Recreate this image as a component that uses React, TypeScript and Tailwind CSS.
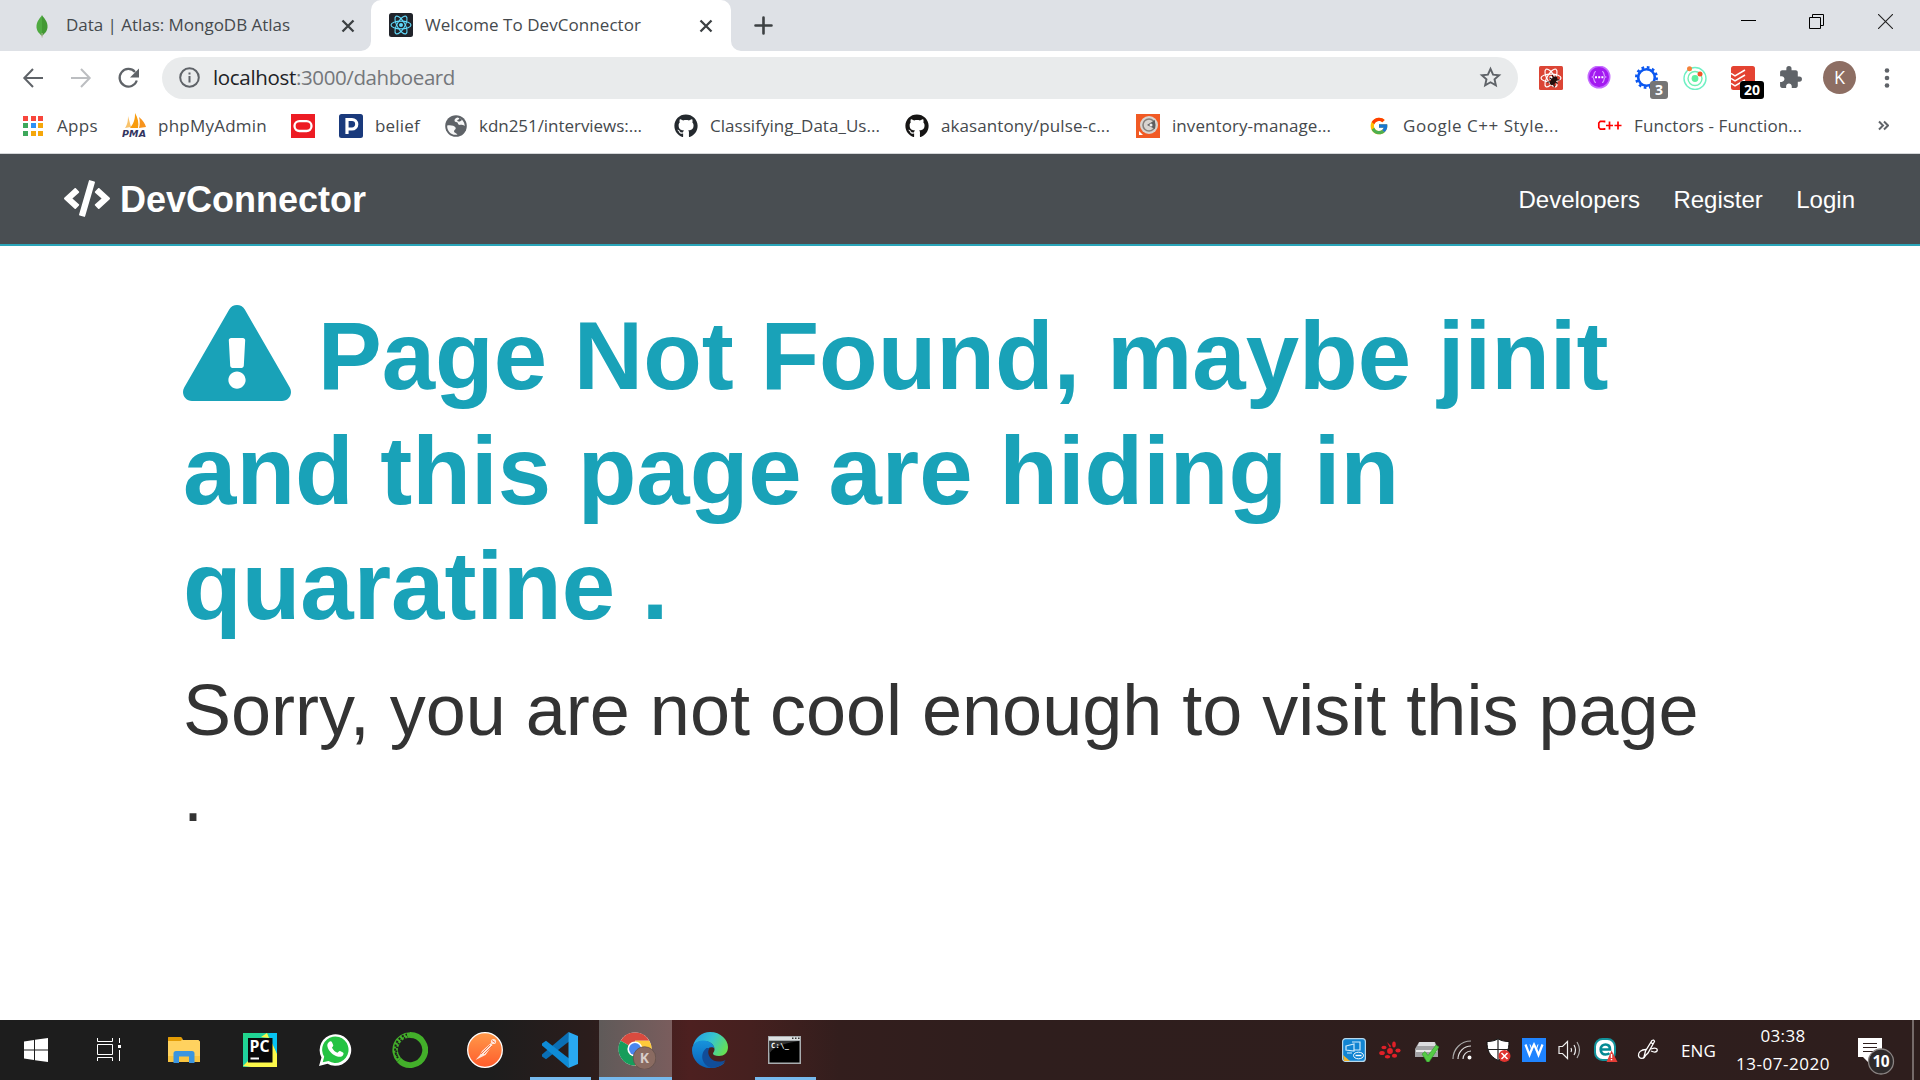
import React, { useLayoutEffect, useRef, useState } from "react";
import { FaCode, FaExclamationTriangle, FaGithub } from "react-icons/fa";
import { MdExtension } from "react-icons/md";
import { FcGoogle } from "react-icons/fc";

/** A single line of text whose tracking is adjusted to fill `w` pixels. */
function Fit({ w, children, className = "" }: { w: number; children: string; className?: string }) {
  const ref = useRef<HTMLSpanElement>(null);
  const [tracking, setTracking] = useState(0);
  useLayoutEffect(() => {
    if (ref.current) setTracking((w - ref.current.getBoundingClientRect().width) / children.length);
  }, [w, children]);
  return (
    <span className={`block shrink-0 whitespace-nowrap ${className}`} style={{ width: w }}>
      <span ref={ref} className="inline-block" style={{ letterSpacing: tracking }}>
        {children}
      </span>
    </span>
  );
}

const AtomIcon = ({ color = "#61dafb", sw = 1.1 }: { color?: string; sw?: number }) => (
  <g fill="none" stroke={color} strokeWidth={sw}>
    <ellipse cx="12" cy="12" rx="10" ry="3.9" />
    <ellipse cx="12" cy="12" rx="10" ry="3.9" transform="rotate(60 12 12)" />
    <ellipse cx="12" cy="12" rx="10" ry="3.9" transform="rotate(120 12 12)" />
    <circle cx="12" cy="12" r="2" fill={color} stroke="none" />
  </g>
);

const Cross = () => (
  <svg width="14" height="14" viewBox="0 0 14 14" className="shrink-0">
    <path d="M1.500 1.500l11 11M12.500 1.500l-11 11" stroke="#3c4043" strokeWidth="2.300" />
  </svg>
);

function TabStrip() {
  return (
    <div className="flex h-[51px] bg-[#dee1e6] text-[17px] text-[#45494d]">
      <div className="flex h-[51px] w-[371px] items-center rounded-br-[10px] pl-[34px]">
        <svg width="16" height="24" viewBox="0 0 16 24">
          <path d="M8 1C6.500 4 2 7 2.500 13.500 3 18 6 20 8 22z" fill="#4faa41" />
          <path d="M8 1c1.500 3 6 6 5.500 12.500C13 18 10 20 8 22z" fill="#439934" />
          <path d="M7.600 19h1v4.500h-1z" fill="#b8b09c" />
        </svg>
        <Fit w={224} className="ml-4 pb-[2px]">Data | Atlas: MongoDB Atlas</Fit>
        <span className="ml-[51px]"><Cross /></span>
      </div>
      <div className="relative flex h-[51px] w-[360px] items-center rounded-t-[10px] bg-white pl-[18px]">
        <svg className="absolute bottom-0 -left-[10px]" width="10" height="10">
          <path d="M10 0v10H0A10 10 0 0 0 10 0z" fill="#fff" />
        </svg>
        <svg className="absolute -right-[10px] bottom-0" width="10" height="10">
          <path d="M0 0v10h10A10 10 0 0 1 0 0z" fill="#fff" />
        </svg>
        <svg width="24" height="24" viewBox="0 0 24 24" className="-mt-px">
          <rect width="24" height="24" rx="2.500" fill="#20232a" />
          <AtomIcon sw={1.1} />
        </svg>
        <Fit w={216} className="ml-[12px] pb-[2px]">Welcome To DevConnector</Fit>
        <span className="ml-[58px]"><Cross /></span>
      </div>
      <div className="flex grow items-center pl-[23px]">
        <svg width="19" height="19" viewBox="0 0 19 19">
          <path d="M9.500 1.500v16M1.500 9.500h16" stroke="#3c4043" strokeWidth="2.600" strokeLinecap="round" />
        </svg>
      </div>
      <div className="flex h-[43px] items-center text-black">
        <svg width="15" height="15" className="mr-[53px]">
          <path d="M0 6.500h15" stroke="#000" />
        </svg>
        <svg width="15" height="15" viewBox="0 0 15 15" className="mr-[54px]">
          <path d="M.5 3.500h11v11H.5zM3.500 3V.5h11v11H12" fill="none" stroke="#000" />
        </svg>
        <svg width="15" height="15" viewBox="0 0 15 15" className="mr-[27px]">
          <path d="M0 0l15 15M15 0L0 15" stroke="#222" strokeWidth="1.100" />
        </svg>
      </div>
    </div>
  );
}

function Toolbar() {
  return (
    <div className="flex h-[53px] items-center pl-[22px]">
      <svg width="22" height="22" viewBox="0 0 22 22" fill="none" stroke="#5f6368" strokeWidth="2">
        <path d="M21 11H2.500M11 2L2.300 11l8.700 9" />
      </svg>
      <svg className="ml-[26px]" width="22" height="22" viewBox="0 0 22 22" fill="none" stroke="#bcbec1" strokeWidth="2">
        <path d="M1 11h18.500M11 2l8.700 9-8.700 9" />
      </svg>
      <svg className="ml-[25px]" width="24" height="24" viewBox="0 0 24 24">
        <path d="M19.800 14.500A8.800 8.800 0 1 1 18 5.900" fill="none" stroke="#5f6368" strokeWidth="2.200" />
        <path d="M22 2.500v9h-9z" fill="#5f6368" />
      </svg>
      <div className="ml-[21px] flex h-[42px] w-[1356px] items-center rounded-full bg-[#e9ebec] pl-[16px]">
        <svg width="23" height="23" viewBox="0 0 23 23">
          <circle cx="11.500" cy="11.500" r="9.300" fill="none" stroke="#5f6368" strokeWidth="2" />
          <path d="M10.500 10h2v6.500h-2zM10.500 6.500h2v2h-2z" fill="#5f6368" />
        </svg>
        <Fit w={83} className="ml-3 text-[20.5px] text-[#202124]">localhost</Fit>
        <Fit w={159} className="text-[20.5px] text-[#74777b]">:3000/dahboeard</Fit>
        <svg className="ml-[1024px]" width="23" height="23" viewBox="0 0 24 24">
          <path d="M12 3l2.700 6 6.300.6-4.800 4.300 1.400 6.300L12 17l-5.600 3.200 1.400-6.300L3 9.600 9.300 9z" fill="none" stroke="#5f6368" strokeWidth="2" />
        </svg>
      </div>
      <div className="flex items-center pl-[21px]">
        <svg width="24" height="24" viewBox="0 0 24 24">
          <rect width="24" height="24" rx="1.500" fill="#dc4535" />
          <AtomIcon color="#fff" sw={1.2} />
          <g transform="rotate(35 15 15)">
            <ellipse cx="14.500" cy="15" rx="2.700" ry="5" fill="#23100e" />
            <path d="M10 11l3 2M19 11l-3 2M9.500 15h10M10 20l3-3M19 20l-3-3" stroke="#23100e" strokeWidth="1.200" />
          </g>
        </svg>
        <svg className="ml-6" width="24" height="24" viewBox="0 0 24 24">
          <circle cx="12" cy="11" r="11.500" fill="#c56bff" />
          <circle cx="12" cy="11" r="10" fill="#a31af0" />
          <path d="M9 5.500c-3 0-1 4.500-3.500 5.500C8 12 6 16.500 9 16.500M15 5.500c3 0 1 4.500 3.500 5.500-2.500 1-.5 5.500-3.500 5.500" fill="none" stroke="#d79aff" strokeWidth="1.200" />
          <path d="M8 10.200h2v2H8zM11.200 10.200h2v2h-2zM14.400 10.200h2v2h-2z" fill="#fff" />
        </svg>
        <div className="relative ml-6 h-6 w-6">
          <svg width="24" height="24" viewBox="0 0 24 24">
            <circle cx="11.500" cy="11.500" r="8.300" fill="none" stroke="#0b57f0" strokeWidth="2.600" />
            <circle cx="11.500" cy="11.500" r="10.200" fill="none" stroke="#0b57f0" strokeWidth="2.600" strokeDasharray="2.670 2.670" />
          </svg>
          <span className="absolute top-[15px] left-[15px] flex h-[18px] w-[18px] items-center justify-center rounded-[3px] bg-[#757575] text-[14px] font-bold text-white">3</span>
        </div>
        <svg className="ml-6" width="24" height="24" viewBox="0 0 24 24">
          <circle cx="12" cy="12.500" r="11" fill="none" stroke="#6ff0c4" strokeWidth="1.400" />
          <circle cx="12" cy="12.500" r="7" fill="none" stroke="#6ff0b4" strokeWidth="1.400" />
          <circle cx="12" cy="12.500" r="3.400" fill="#5ff0a0" />
          <circle cx="6.500" cy="2.700" r="2.500" fill="#f5813a" />
          <circle cx="17" cy="8" r="2.500" fill="#f2562a" />
        </svg>
        <div className="relative ml-6 h-6 w-6">
          <svg width="24" height="24" viewBox="0 0 24 24">
            <rect width="24" height="24" rx="2.500" fill="#e44332" />
            <path d="M0 7.500l4 2.300L14 4M0 12.500l4 2.300L14 9M0 17.500l4 2.300L14 14" fill="none" stroke="#fff" strokeWidth="1.500" />
          </svg>
          <span className="absolute top-[15px] left-[9px] flex h-[18px] w-[24px] items-center justify-center rounded-[3px] bg-black text-[14px] font-bold text-white">20</span>
        </div>
        <MdExtension className="ml-[23px] text-[25px] text-[#5f6368]" />
        <div className="ml-[20px] flex h-[33px] w-[33px] items-center justify-center rounded-full bg-[#8d6e63] text-[18px] text-white">K</div>
        <svg className="ml-[28px]" width="6" height="20" viewBox="0 0 6 20" fill="#5f6368">
          <circle cx="3" cy="2.500" r="2.300" /><circle cx="3" cy="10" r="2.300" /><circle cx="3" cy="17.500" r="2.300" />
        </svg>
      </div>
    </div>
  );
}

function Bookmarks() {
  const dots = ["#f8463c", "#f8463c", "#f8463c", "#3da85b", "#2e90f5", "#f5a70b", "#3da85b", "#f5a70b", "#f5a70b"];
  return (
    <div className="flex h-[50px] items-center border-b border-[#d5d7d9] pb-[6px] pl-[23px] text-[17px] text-[#45494d]">
      <div className="grid w-5 shrink-0 grid-cols-3 gap-x-[3px] gap-y-[2.500px]">
        {dots.map((c, i) => <span key={i} className="h-[5px] w-[5px]" style={{ background: c }} />)}
      </div>
      <Fit w={41} className="ml-[14px]">Apps</Fit>
      <svg className="ml-[24px] shrink-0" width="25" height="25" viewBox="0 0 25 25">
        <path d="M3 15C6 11 6 6 6 3l3 11z" fill="#f9c36b" />
        <path d="M8 15C13 9 13 4 13 0c3 5 4 10 3 15z" fill="#f89c0e" />
        <path d="M17 15c1-4 1-7 0-11 4 3 6 7 7 10z" fill="#f7941e" />
        <text x="0" y="23.500" fontSize="9.500" fontWeight="bold" fontStyle="italic" fill="#33355f" textLength="24" fontFamily="DejaVu Sans">PMA</text>
      </svg>
      <Fit w={109} className="ml-[11px]">phpMyAdmin</Fit>
      <svg className="ml-[24px] shrink-0" width="24" height="24" viewBox="0 0 24 24">
        <path d="M0 0h24v24H0z" fill="#ed1c24" />
        <rect x="3.500" y="7.200" width="17" height="9.800" rx="4.900" fill="none" stroke="#fff" strokeWidth="2.300" />
      </svg>
      <svg className="ml-[24px] shrink-0" width="24" height="24" viewBox="0 0 24 24">
        <rect width="24" height="24" rx="2.500" fill="#1a3a7c" />
        <path d="M8 20V5.500h5a4.500 4.500 0 0 1 0 9.500H8" fill="none" stroke="#fff" strokeWidth="3.200" />
      </svg>
      <Fit w={45} className="ml-[12px]">belief</Fit>
      <svg className="ml-[24px] shrink-0" width="24" height="24" viewBox="0 0 24 24">
        <circle cx="12" cy="12" r="10.800" fill="#5f6368" />
        <path d="M13.500 3.500c-2 .5-3 1.500-3 3 0 1.300 1 1.500 2.500 1.800 1.200.3.600 2 2 2.500 1.300.4 2.500-.8 5.800 1.200a8.800 8.800 0 0 0-7.300-8.500z" fill="#fff" opacity=".95" />
        <path d="M14.500 3.500c1.500 1 .5 2-1 2.500-.8.400 0 1.300 1 1.500 1.500.3 2.500-.8 3.500-1.500-1-1.500-2-2-3.500-2.500z" fill="#5f6368" />
        <path d="M3.200 11.500c3.500-.5 7 0 8.300 2 1 1.800-1.300 2-1.500 3.800-.1 1.700 2 1.500 3.500 3.300-6 1.400-10.800-3.600-10.300-9.100z" fill="#fff" opacity=".95" />
      </svg>
      <Fit w={163} className="ml-[11px]">kdn251/interviews:...</Fit>
      <FaGithub className="ml-[32px] shrink-0 text-[24px] text-[#24292e]" />
      <Fit w={170} className="ml-[12px]">Classifying_Data_Us...</Fit>
      <FaGithub className="ml-[25px] shrink-0 text-[24px] text-[#161514]" />
      <Fit w={169} className="ml-[12px]">akasantony/pulse-c...</Fit>
      <svg className="ml-[26px] shrink-0" width="24" height="24" viewBox="0 0 24 24">
        <path d="M0 0h24v24H0z" fill="#f15a24" />
        <circle cx="13" cy="11" r="9" fill="#d8d4d0" />
        <circle cx="13" cy="11" r="6" fill="none" stroke="#85807c" strokeWidth="1.600" />
        <path d="M11 11l8-5v9z" fill="#5e5e60" />
        <circle cx="15" cy="11" r="1.500" fill="#eee" />
        <path d="M3 17v4h4z" fill="#fff" />
      </svg>
      <Fit w={159} className="ml-[12px]">inventory-manage...</Fit>
      <FcGoogle className="ml-[38px] shrink-0 text-[20px]" />
      <Fit w={156} className="ml-[14px]">Google C++ Style...</Fit>
      <svg className="ml-[38px] shrink-0" width="25" height="24" viewBox="0 0 25 24">
        <path d="M7.500 8.500V7.300H3.300L1.800 9v4.500l1.500 1.700h4.200V14M9 11.500h7M12.500 7.500v8M17.500 11.500h7M21 7.500v8" fill="none" stroke="#f00" strokeWidth="1.700" />
      </svg>
      <Fit w={168} className="ml-[12px]">Functors - Function...</Fit>
      <svg className="ml-[76px] shrink-0" width="11" height="11" viewBox="0 0 11 11" fill="none" stroke="#5f6368" strokeWidth="2">
        <path d="M1 1.500l4 4-4 4M6 1.500l4 4-4 4" />
      </svg>
    </div>
  );
}

function Page() {
  return (
    <main className="flex h-[866px] flex-col bg-white font-['Liberation_Sans',Arial,sans-serif]">
      <nav className="flex h-[92px] shrink-0 items-center justify-between border-b-2 border-[#2ba5b9] bg-[#494e52] pr-[65px] pl-[64px] text-white">
        <div className="flex items-center gap-[10px] text-4xl font-bold">
          <FaCode className="-mt-[2px] h-[37px] w-[46px]" />
          <span className="pt-px">DevConnector</span>
        </div>
        <div className="flex gap-[33.5px] pt-[2px] text-2xl">
          <span>Developers</span>
          <span>Register</span>
          <span>Login</span>
        </div>
      </nav>
      <section className="px-[183px] pt-[52px]">
        <h1 className="text-[96px] leading-[115px] font-bold whitespace-nowrap text-[#19a2b8]">
          <FaExclamationTriangle className="inline-block h-[96px] w-[108px] align-[-12px]" /> Page Not Found, maybe jinit
          <br />and this page are hiding in
          <br />quaratine .
        </h1>
        <p className="mt-[24px] text-[72px] leading-[86px] whitespace-nowrap text-[#333]">
          Sorry, you are not cool enough to visit this page
          <br />.
        </p>
      </section>
    </main>
  );
}

const Slot = ({ children, className = "" }: { children: React.ReactNode; className?: string }) => (
  <div className={`flex h-[60px] shrink-0 items-center justify-center ${className}`}>{children}</div>
);

function Apps() {
  return (
    <>
      <Slot className="w-[72px]">
        <svg width="24" height="24" viewBox="0 0 24 24" fill="#fff">
          <path d="M0 3.400l10-1.400v9.500H0zM11 1.800L24 0v11.500H11zM0 12.500h10V22L0 20.600zM11 12.500h13V24l-13-1.800z" />
        </svg>
      </Slot>
      <Slot className="w-[74px]">
        <svg width="25" height="24" viewBox="0 0 25 24" fill="none" stroke="#fff" strokeWidth="1">
          <path d="M.5 0v3.500h15V0M.5 6.500h15v10H.5zM.5 23v-3.500h15V23M22.500 0v5M22.500 12v11" />
          <path d="M21 7h3v3h-3z" fill="#fff" stroke="none" />
        </svg>
      </Slot>
      <Slot className="w-[76px]">
        <svg width="32" height="28" viewBox="0 0 32 28">
          <path d="M0 1.500h13l2 2.500h15.500L32 5.500V26H0z" fill="#ffd25f" />
          <path d="M0 2.200Q0 1 1.200 1H13l1.500 1.500L13 5H0z" fill="#e39c05" />
          <path d="M0 20h32v6H0z" fill="#f9c540" />
          <path d="M5.500 27V17.500q0-2.500 2.500-2.500h16q2.500 0 2.500 2.500V27h-5.500v-6.500H11V27z" fill="#3b95df" />
        </svg>
      </Slot>
      <Slot className="w-[75px]">
        <svg width="34" height="34" viewBox="0 0 34 34">
          <defs>
            <linearGradient id="pc" x1="0" y1="0" x2="1" y2="1">
              <stop offset="0" stopColor="#21d789" /><stop offset=".5" stopColor="#1fcfa5" /><stop offset="1" stopColor="#07c3f2" />
            </linearGradient>
          </defs>
          <path d="M0 0h34v34H0z" fill="url(#pc)" />
          <path d="M18 4l6-4 2 5zM29 9l5 12v13H8l-8-1 8-8z" fill="#fcf84a" />
          <path d="M26 0h8v20l-6-12z" fill="#07c3f2" />
          <path d="M5 5h24.500v24.500H5z" fill="#090909" />
          <text x="6.500" y="19" fontSize="15.500" fontWeight="bold" fill="#fff" textLength="20" lengthAdjust="spacingAndGlyphs" fontFamily="Open Sans">PC</text>
          <path d="M7.500 24.500h8.500v2H7.500z" fill="#fff" />
        </svg>
      </Slot>
      <Slot className="w-[75px]">
        <svg width="34" height="34" viewBox="0 0 34 34">
          <path d="M1 33l2.500-8.500A15.800 15.800 0 1 1 9.500 30.700z" fill="#fff" />
          <path d="M4.700 29.300l1.500-5.500a13.200 13.200 0 1 1 4.300 4.200z" fill="#25c343" />
          <path d="M11 9c1-1 2.500-.8 3 .3l1.200 2.800c.4 1-.8 2-1.200 2.700 1.500 2.700 3 4 5.500 5 .8-.7 1.600-2.200 2.600-1.700l2.900 1.400c1.200.7.3 3-1 3.800-1.800 1-4.200.7-7.500-1C13 20.500 9.500 16 9.300 12.500 9.300 11 10 9.900 11 9z" fill="#fff" />
        </svg>
      </Slot>
      <Slot className="w-[75px]">
        <svg width="36" height="36" viewBox="0 0 36 36" fill="none">
          <path d="M18 3a15 15 0 1 1-11 25" stroke="#43b02a" strokeWidth="5.800" />
          <path d="M7 28A15 15 0 0 1 18 3" stroke="#43b02a" strokeWidth="5.600" />
          <path d="M6 26A15 15 0 0 1 15 2.500" stroke="#1d1d1d" strokeWidth="2" strokeDasharray="2 2" />
          <path d="M5 24A15 15 0 0 1 16 5" stroke="#1d1d1d" strokeWidth="2" strokeDasharray="1.500 2.500" />
        </svg>
      </Slot>
      <Slot className="w-[75px]">
        <svg width="36" height="36" viewBox="0 0 36 36">
          <defs><linearGradient id="pm" x1="0" y1="0" x2="0" y2="1"><stop stopColor="#ff9a4a" /><stop offset="1" stopColor="#ff5c2c" /></linearGradient></defs>
          <circle cx="18" cy="18" r="17.300" fill="url(#pm)" stroke="#fff" strokeWidth="1.300" />
          <circle cx="26.500" cy="9.500" r="2.600" fill="#ffe6da" />
          <path d="M24 11l-9 8-2 4-4.500 5 6-3 4-2 7-10z" fill="#ffe6da" />
          <path d="M23 13l-9 9M25 14l-8 8M25 8.500l3 2" stroke="#f26b3a" strokeWidth=".9" />
        </svg>
      </Slot>
      <Slot className="relative w-[75px]">
        <svg width="36" height="36" viewBox="0 0 36 36">
          <path d="M27 9.500L4 27.300 0 24.500v-2L26.500 0z" fill="#0a6fb5" />
          <path d="M27 26.500L4 8.700 0 11.500v2L26.500 36z" fill="#0e8bd6" />
          <path d="M26.500 0L36 4v28l-9.500 4z" fill="#29a9f2" />
        </svg>
        <span className="absolute bottom-0 left-[8px] h-[3px] w-[61px] bg-[#76b9ed]" />
      </Slot>
      <Slot className="relative w-[75px]">
        <div className="absolute left-[2px] h-[60px] w-[73px] border-b-[3px] border-[#76b9ed] bg-linear-to-r from-[#5f5a59] to-[#7a5d5d]" />
        <svg className="relative left-[2px]" width="38" height="38" viewBox="0 0 38 38">
          <circle cx="17" cy="18" r="16.500" fill="#fff" />
          <path d="M17 18L2.700 9.700A16.500 16.500 0 0 1 31.300 9.700H17z" fill="#d84b3f" />
          <path d="M17 18l-14.300-8.300A16.500 16.500 0 0 0 17 34.500l7-12z" fill="#169d5b" />
          <path d="M17 18V9.700h14.300A16.500 16.500 0 0 1 17 34.500z" fill="#fdca3b" />
          <circle cx="17" cy="18" r="7.600" fill="#fff" />
          <circle cx="17" cy="18" r="6" fill="#4a86ee" />
          <circle cx="26.500" cy="27" r="11.300" fill="#8a6b61" stroke="#5f4d48" strokeWidth=".7" />
          <text x="26.500" y="32" fontSize="14" fontWeight="bold" textAnchor="middle" fill="#d8cdc9" fontFamily="Open Sans">K</text>
        </svg>
      </Slot>
      <Slot className="w-[75px]">
        <svg width="36" height="36" viewBox="0 0 36 36">
          <defs>
            <linearGradient id="eg" x1="0" y1=".2" x2="1" y2=".6"><stop stopColor="#249fe5" /><stop offset=".5" stopColor="#36c5d0" /><stop offset="1" stopColor="#66e054" /></linearGradient>
            <linearGradient id="eb" x1="0" y1="0" x2="0" y2="1"><stop stopColor="#1793dc" /><stop offset="1" stopColor="#0b62b8" /></linearGradient>
          </defs>
          <path d="M1 14A18 18 0 0 1 18 0c11 0 18 8 18 15 0 6-4 9-9 9-4 0-6-1-6-2.500 0-1 1.500-1.500 1.500-4C22.500 13 18 9 12 9 7 9 3 11 1 14z" fill="url(#eg)" />
          <path d="M0 18c0-6 5-9.500 11-9.500 7 0 11 4 11.500 8-1.500-2-7-2-8.500 3-1.500 6 2 12 9 13.500 4 .8 8-1.500 10-3C30 34 24 36 18 36 8 36 0 28 0 18z" fill="url(#eb)" />
          <path d="M14.500 16C7 22 10 33 19 36c6 0 12-3 14.500-8-5 2.500-12 2-15-2-2.500-3-3-7-1-10z" fill="#114d99" />
        </svg>
      </Slot>
      <Slot className="relative w-[75px]">
        <svg width="33" height="28" viewBox="0 0 33 28">
          <path d="M0 0h33v28H0z" fill="#a9adb0" />
          <path d="M1 1h31v3H1z" fill="#dde0e2" />
          <path d="M24 1.500h1.500v1.500H24zM27 1.500h1.500v1.500H27zM30 1.500h1.500v1.500H30z" fill="#333" />
          <path d="M1.500 5h30v21.500h-30z" fill="#000" />
          <path d="M1.500 5h30c-12 2-24 4-30 12z" fill="#333" />
          <text x="3" y="11.500" fontSize="7" fontWeight="bold" fill="#fff" fontFamily="DejaVu Sans Mono" textLength="18">C:\_</text>
        </svg>
        <span className="absolute bottom-0 left-[8px] h-[3px] w-[61px] bg-[#76b9ed]" />
      </Slot>
    </>
  );
}

function Tray() {
  return (
    <>
      <Slot className="w-[36px]">
        <svg width="24" height="24" viewBox="0 0 24 24">
          <rect x=".6" y=".6" width="22.800" height="22.800" rx="3" fill="#1184d2" stroke="#b7d8ec" strokeWidth="1.200" />
          <path d="M1 17l7 6H2z" fill="#f2b52c" />
          <path d="M4 8l8-2v7l-8-1zM10 4h8v8h-6M5 15h5" fill="none" stroke="#cfeafb" strokeWidth="1.200" />
          <ellipse cx="16.500" cy="17.500" rx="5" ry="3.300" fill="#1184d2" stroke="#fff" />
          <path d="M13.500 17.500h6" stroke="#fff" strokeWidth="1.400" />
        </svg>
      </Slot>
      <Slot className="w-[36px]">
        <svg width="22" height="18" viewBox="0 0 22 18" fill="#e02028">
          <circle cx="11" cy="10" r="2.900" /><ellipse cx="5" cy="6.500" rx="2.600" ry="1.700" /><ellipse cx="3" cy="12" rx="2.800" ry="2" />
          <ellipse cx="8.500" cy="15.800" rx="2.700" ry="1.800" /><ellipse cx="15.500" cy="14.800" rx="2.600" ry="2" /><ellipse cx="19" cy="9.500" rx="2.600" ry="2" />
          <ellipse cx="15" cy="3.500" rx="1.800" ry="2.900" /><path d="M8 1l4 4-1 2z" />
        </svg>
      </Slot>
      <Slot className="w-[36px]">
        <svg width="25" height="24" viewBox="0 0 25 24">
          <path d="M5 4h16l3 7v8H1v-8z" fill="#a2a2a4" />
          <path d="M5.500 4h15l1 4h-18z" fill="#dcdcde" />
          <path d="M2 12h21v2H2z" fill="#e8e8e8" />
          <path d="M8 16l3-2.500 3 4L22 7l3 2-10 15h-2z" fill="#55cc45" stroke="#2f9a2c" strokeWidth=".6" />
        </svg>
      </Slot>
      <Slot className="w-[36px]">
        <svg width="20" height="20" viewBox="0 0 20 20" fill="none" stroke="#ddd" strokeWidth="1.200">
          <path d="M1 19A18 18 0 0 1 19 1" stroke="#aaa" /><path d="M6 19A13 13 0 0 1 19 6" /><path d="M11 19a8 8 0 0 1 8-8" />
          <circle cx="17.500" cy="17.500" r="1.400" fill="#fff" stroke="#fff" />
        </svg>
      </Slot>
      <Slot className="w-[36px]">
        <svg width="25" height="25" viewBox="0 0 25 25">
          <path d="M12 .8c3 2 7 2.700 11 2.700C23 12 21 18 12 22.500 3 18 1 12 1 3.500c4 0 8-.7 11-2.700z" fill="#fff" stroke="#111" />
          <path d="M12 1v21M1 11.500h22" stroke="#222" strokeWidth="1.200" />
          <circle cx="18.500" cy="18" r="6" fill="#e0342f" />
          <path d="M15.500 15l6 6M21.500 15l-6 6" stroke="#fff" strokeWidth="1.500" />
        </svg>
      </Slot>
      <Slot className="w-[36px]">
        <svg width="24" height="24" viewBox="0 0 24 24">
          <path d="M0 0h24v24H0z" fill="#1f84ff" />
          <path d="M3.500 6.500L7.500 17 9.800 11 12 6.500 14.200 11 16.500 17 20.500 6.500" fill="none" stroke="#fff" strokeWidth="2.200" />
          <path d="M8 6.500l2 6M16 6.500l-2 6" stroke="#fff" strokeWidth="1" />
        </svg>
      </Slot>
      <Slot className="w-[36px]">
        <svg width="24" height="20" viewBox="0 0 24 20" fill="none" stroke="#eee" strokeWidth="1.200">
          <path d="M1 6.500h3.500L9.500 1.500v17l-5-5H1z" />
          <path d="M13 8q1.200 2 0 4M16 5q3 5 0 10" /><path d="M19 2q5 8 0 16" stroke="#aaa" />
        </svg>
      </Slot>
      <Slot className="w-[36px]">
        <svg width="24" height="24" viewBox="0 0 24 24" className="-ml-px">
          <rect x="1" y="1" width="20" height="21" rx="7.500" fill="#fff" stroke="#12929b" strokeWidth="2" />
          <path d="M6.500 11.500h9.500c0-3.500-2-5-4.500-5s-4.800 1.700-4.800 5 2.300 5 4.800 5c1.500 0 3-.4 4-1.200" fill="none" stroke="#068a94" strokeWidth="2.700" />
          <path d="M17.500 12.500L23.500 24h-11z" fill="#e53c35" />
          <path d="M16.800 16h1.400v4h-1.400zM16.800 21h1.400v1.300h-1.400z" fill="#fff" />
        </svg>
      </Slot>
      <Slot className="w-[48px]">
        <svg width="22" height="22" viewBox="0 0 22 22" fill="none" stroke="#fff" strokeWidth="1.300">
          <path d="M7 18L8.500 12 15 1.500q2-1.200 2.500 1L11 14zM14 3.500l2 1.500" />
          <path d="M9 10.500c-5 0-8 3-7.500 6 .5 4 6 3.500 6.500.5M14 10c5-2 7 0 6 2-1 1.300-4 1-6 0" />
        </svg>
      </Slot>
    </>
  );
}

function Taskbar() {
  return (
    <footer className="flex h-[60px] bg-[linear-gradient(90deg,#1d1d1d_0px,#1d1d1d_490px,#2b1d1c_590px,#4d2020_690px,#45201f_750px,#331e1d_840px,#2f1e1d_1000px,#2e1e1d_1920px)] text-white">
      <Apps />
      <div className="w-[514px]" />
      <Tray />
      <Slot className="ml-[9px] pt-px"><Fit w={35} className="text-[17px]">ENG</Fit></Slot>
      <div className="ml-[20px] flex w-[94px] shrink-0 flex-col items-center pt-[2px] text-[17px] leading-[28px]">
        <Fit w={45}>03:38</Fit>
        <Fit w={94}>13-07-2020</Fit>
      </div>
      <Slot className="ml-[28px] w-[38px]">
        <svg width="38" height="38" viewBox="0 0 38 38" className="mt-[12px]">
          <path d="M0 1h24v19h-13v6l-6-6H0z" fill="#fff" />
          <path d="M5 6.500h14M5 10.500h14M5 14.500h14" stroke="#2e1e1d" strokeWidth="1.200" />
          <circle cx="23" cy="24.500" r="12.500" fill="#2e2a2a" stroke="#8a8483" strokeWidth="1.300" />
          <text x="23" y="30" fontSize="15.500" fontWeight="bold" textAnchor="middle" textLength="17" fill="#fff" fontFamily="Open Sans">10</text>
        </svg>
      </Slot>
      <span className="ml-auto h-[60px] w-[2px] bg-[#756a69]" />
      <span className="w-[6px] shrink-0" />
    </footer>
  );
}

export default function App() {
  return (
    <div className="flex h-[1080px] w-[1920px] flex-col overflow-hidden bg-white font-['Open_Sans','Noto_Sans',sans-serif]">
      <TabStrip />
      <Toolbar />
      <Bookmarks />
      <Page />
      <Taskbar />
    </div>
  );
}
